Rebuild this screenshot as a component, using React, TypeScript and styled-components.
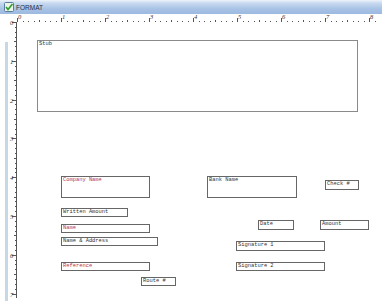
import React from "react";
import styled, { createGlobalStyle } from "styled-components";

const Global = createGlobalStyle`
  html, body { margin: 0; padding: 0; background: #fff; }
  body { width: 388px; height: 301px; overflow: hidden; font-family: "Liberation Sans", Arial, sans-serif; }
`;

const H_INCH = 44;
const V_INCH = 38.8;

const Window = styled.div`
  width: 388px;
  height: 301px;
  display: flex;
  flex-direction: column;
  background: #fff;
`;

const TitleBar = styled.div`
  height: 14px;
  width: 382px;
  display: flex;
  align-items: center;
  gap: 2px;
  padding-left: 4px;
  box-sizing: border-box;
  background: linear-gradient(#eef3fa 0px, #c9daf0 3px, #a8c2e5 9px, #9cb9df 14px);
`;

const TitleText = styled.span`
  font-family: "Liberation Sans", Arial, sans-serif;
  font-size: 6.5px;
  color: #22304a;
`;

const Body = styled.div`
  flex: 1;
  display: grid;
  grid-template-columns: 17px 1fr;
  grid-template-rows: 8px 1fr;
  position: relative;
`;

const Corner = styled.div``;

const HRuler = styled.div`
  position: relative;
  border-bottom: 1px solid #6f6f6f;
  box-sizing: border-box;
  width: 364px;
  height: 9px;
`;

const VRuler = styled.div`
  position: relative;
  border-right: 1px solid #555;
  box-sizing: border-box;
  height: 276px;
`;

const Strip = styled.div`
  position: absolute;
  left: 5px;
  top: 28px;
  width: 3px;
  height: 262px;
  background: #c6d7e6;
`;

const Tick = styled.span`
  position: absolute;
  background: #555;
`;

const RulerLabel = styled.span`
  position: absolute;
  font-family: "Liberation Serif", serif;
  font-style: italic;
  font-size: 6.5px;
  color: #333;
  line-height: 1;
`;

const Canvas = styled.div`
  position: relative;
  background: #fff;
`;

const Field = styled.div<{ $red?: boolean; $light?: boolean }>`
  position: absolute;
  box-sizing: border-box;
  border: 1px solid ${(p) => (p.$light ? "#8a8a8a" : "#666")};
  background: #fff;
  font-family: "Liberation Mono", "Courier New", monospace;
  font-size: 5.4px;
  line-height: 6px;
  padding: 0 1px;
  color: ${(p) => (p.$red ? "#b5334e" : "#333")};
  white-space: nowrap;
  overflow: hidden;
`;

type F = { label: string; x: number; y: number; w: number; h: number; red?: boolean; light?: boolean };

const fields: F[] = [
  { label: "Stub", x: 20, y: 18, w: 321, h: 72, light: true },
  { label: "Company Name", x: 44, y: 154, w: 89, h: 22, red: true },
  { label: "Bank Name", x: 190, y: 154, w: 90, h: 22 },
  { label: "Check #", x: 308, y: 158, w: 34, h: 10 },
  { label: "Written Amount", x: 44, y: 186, w: 67, h: 9 },
  { label: "Name", x: 44, y: 202, w: 89, h: 9, red: true },
  { label: "Date", x: 241, y: 198, w: 36, h: 10 },
  { label: "Amount", x: 303, y: 198, w: 49, h: 10 },
  { label: "Name & Address", x: 44, y: 215, w: 97, h: 9 },
  { label: "Signature 1", x: 219, y: 219, w: 89, h: 10 },
  { label: "Reference", x: 44, y: 240, w: 89, h: 9, red: true },
  { label: "Signature 2", x: 219, y: 240, w: 89, h: 9 },
  { label: "Route #", x: 124, y: 255, w: 35, h: 9 },
];

function HTicks() {
  const items: React.ReactNode[] = [];
  for (let i = 0; i <= 8 * 8 + 3; i++) {
    const x = (i * H_INCH) / 8;
    if (x > 362) break;
    const major = i % 8 === 0;
    const half = i % 4 === 0;
    const len = major ? 4 : half ? 2 : 1;
    items.push(<Tick key={"t" + i} style={{ left: Math.round(x), bottom: 0, width: 1, height: len }} />);
    if (major) {
      items.push(
        <RulerLabel key={"l" + i} style={{ left: Math.round(x) + 1, top: 0 }}>
          {i / 8}
        </RulerLabel>
      );
    }
  }
  return <>{items}</>;
}

function VTicks() {
  const items: React.ReactNode[] = [];
  for (let i = 0; i <= 7 * 8; i++) {
    const y = (i * V_INCH) / 8;
    if (y > 274) break;
    const major = i % 8 === 0;
    const half = i % 4 === 0;
    const len = major ? 4 : half ? 2 : 1;
    items.push(<Tick key={"t" + i} style={{ top: Math.round(y), right: -1, height: 1, width: len + 1 }} />);
    if (major) {
      items.push(
        <RulerLabel key={"l" + i} style={{ top: Math.round(y) - 2, left: 10 }}>
          {i / 8}
        </RulerLabel>
      );
    }
  }
  return <>{items}</>;
}

function CheckIcon() {
  return (
    <svg width="10" height="10" viewBox="0 0 10 10">
      <rect x="0.5" y="0.5" width="9" height="9" rx="1" fill="#e9f3e6" stroke="#5c7c9c" />
      <path d="M2 5 L4 7.5 L8.5 2" stroke="#2f9a2f" strokeWidth="1.6" fill="none" />
    </svg>
  );
}

export default function App() {
  return (
    <Window>
      <Global />
      <TitleBar>
        <CheckIcon />
        <TitleText>FORMAT</TitleText>
      </TitleBar>
      <Body>
        <Strip />
        <Corner />
        <HRuler>
          <HTicks />
        </HRuler>
        <VRuler>
          <VTicks />
        </VRuler>
        <Canvas>
          {fields.map((f) => (
            <Field key={f.label} $red={f.red} $light={f.light} style={{ left: f.x, top: f.y, width: f.w, height: f.h }}>
              {f.label}
            </Field>
          ))}
        </Canvas>
      </Body>
    </Window>
  );
}
